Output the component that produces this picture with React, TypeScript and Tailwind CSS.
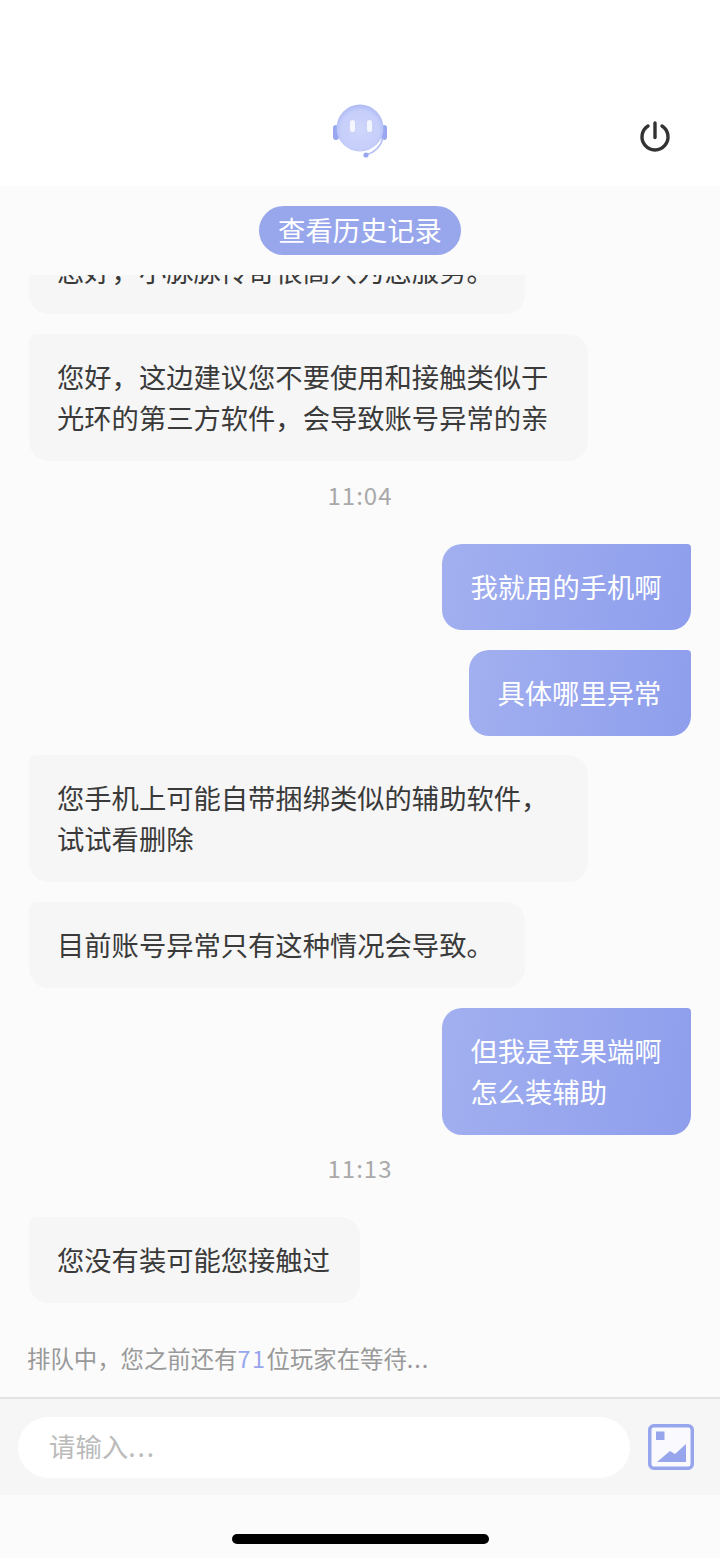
const font = "font-['Noto_Sans_CJK_SC','Noto_Sans',sans-serif]";

function Left({ w, children }: { w: string; children: React.ReactNode }) {
  return (
    <div className={`${w} self-start whitespace-nowrap rounded-[20px] rounded-tl-[8px] bg-[#f6f6f6] pl-[28px] pt-[22px] pb-[23px] text-[27.3px] leading-[41px] text-[#3a3a3a]`}>
      {children}
    </div>
  );
}

function Right({ w, children }: { w: string; children: React.ReactNode }) {
  return (
    <div className={`${w} self-end whitespace-nowrap rounded-[20px] rounded-tr-[4px] bg-linear-[100deg] from-[#a2b0f0] to-[#8e9eec] pl-[28.5px] pt-[22px] pb-[23px] text-[27.3px] leading-[41px] text-white`}>
      {children}
    </div>
  );
}

function Time({ children, after }: { children: React.ReactNode; after: string }) {
  return <div className={`${after} pb-[2px] text-center text-[24px] leading-[28px] tracking-[1px] text-[#a9a9a9]`}>{children}</div>;
}

function Avatar() {
  return (
    <svg width="60" height="60" viewBox="0 0 60 60">
      <defs>
        <radialGradient id="head" cx="0.5" cy="0.55" r="0.55">
          <stop offset="0" stopColor="#cfd6fb" />
          <stop offset="0.75" stopColor="#c6cefa" />
          <stop offset="1" stopColor="#aebaf4" />
        </radialGradient>
        <filter id="soft">
          <feGaussianBlur stdDeviation="0.6" />
        </filter>
      </defs>
      <g filter="url(#soft)">
        <rect x="3" y="25" width="6" height="15" rx="3" fill="#98a7ef" />
        <rect x="51" y="25" width="6" height="15" rx="3" fill="#98a7ef" />
        <circle cx="30" cy="28" r="23.5" fill="url(#head)" />
        <rect x="20" y="20" width="5" height="12" rx="2.5" fill="#f4f6ff" />
        <rect x="37" y="20" width="5" height="12" rx="2.5" fill="#f4f6ff" />
        <path d="M53 38c-2 8-7 14-17 17" fill="none" stroke="#b3bef5" strokeWidth="1.6" />
        <circle cx="36" cy="55" r="2.6" fill="#98a7ef" />
      </g>
    </svg>
  );
}

function PowerIcon() {
  return (
    <svg width="32" height="32" viewBox="0 0 32 32" fill="none" stroke="#333333" strokeWidth="3.4" strokeLinecap="round" className="block">
      <path d="M16 3v14.5" />
      <path d="M9 6a13 13 0 1 0 14 0" />
    </svg>
  );
}

function ImageIcon() {
  return (
    <svg width="46" height="46" viewBox="0 0 46 46" className="shrink-0">
      <rect x="1.75" y="1.75" width="42.5" height="42.5" rx="4" fill="#fafafe" stroke="#97a6ec" strokeWidth="3.5" />
      <rect x="8" y="7.5" width="8.5" height="8.5" fill="#97a6ec" />
      <path d="M9 38l13-11 5 3 11-10v18z" fill="#97a6ec" />
    </svg>
  );
}

export default function App() {
  return (
    <div className={`${font} flex h-[1558px] w-[720px] flex-col overflow-hidden bg-[#fbfbfb]`}>
      <header className="relative flex h-[186px] shrink-0 items-end justify-center bg-white pb-[26px]">
        <Avatar />
        <button className="absolute right-[49px] top-[120px]">
          <PowerIcon />
        </button>
      </header>

      <div className="flex h-[89px] shrink-0 justify-center pt-[20px]">
        <div className="flex h-[49px] w-[202px] items-center justify-center rounded-full bg-[#98a7ec] pb-[3px] text-[27.3px] text-white">
          查看历史记录
        </div>
      </div>

      {/* message list, scrolled so the first bubble is cut by the top edge */}
      <div className="flex h-[1029px] shrink-0 flex-col gap-[20px] overflow-hidden px-[29px]">
        <div className="-mt-[47px] flex flex-col">
          <Left w="w-[496px]">您好，小脉脉传奇很高兴为您服务。</Left>
        </div>
        <Left w="w-[559px]">
          您好，这边建议您不要使用和接触类似于
          <br />
          光环的第三方软件，会导致账号异常的亲
        </Left>
        <Time after="mb-[13px]">11:04</Time>
        <Right w="w-[249px]">我就用的手机啊</Right>
        <Right w="w-[222px]">具体哪里异常</Right>
        <div className="-mt-[1px] flex flex-col">
          <Left w="w-[559px]">
            您手机上可能自带捆绑类似的辅助软件，
            <br />
            试试看删除
          </Left>
        </div>
        <Left w="w-[496px]">目前账号异常只有这种情况会导致。</Left>
        <Right w="w-[249px]">
          但我是苹果端啊
          <br />
          怎么装辅助
        </Right>
        <div className="-mt-[1px]">
          <Time after="mb-[13px]">11:13</Time>
        </div>
        <Left w="w-[331px]">您没有装可能您接触过</Left>
      </div>

      <div className="h-[95px] shrink-0 whitespace-nowrap border-b-2 border-[#e3e3e3] pl-[27px] pt-[36px] text-[23.4px] leading-[36px] text-[#999999]">
        排队中，您之前还有<span className="tracking-[1.5px] text-[#97a6ec]">71</span>位玩家在等待<span className="tracking-[1px]">...</span>
      </div>

      <div className="flex h-[96px] shrink-0 items-center gap-[18px] bg-[#f6f6f6] pl-[18px] pr-[26px]">
        <div className="flex h-[61px] w-[612px] items-center rounded-full bg-white pb-[2px] pl-[31px] text-[26.4px] text-[#bbbbbb]">
          请输入<span className="tracking-[2px]">...</span>
        </div>
        <ImageIcon />
      </div>

      <div className="flex flex-1 justify-center pt-[39px]">
        <div className="h-[10px] w-[257px] rounded-full bg-black" />
      </div>
    </div>
  );
}
